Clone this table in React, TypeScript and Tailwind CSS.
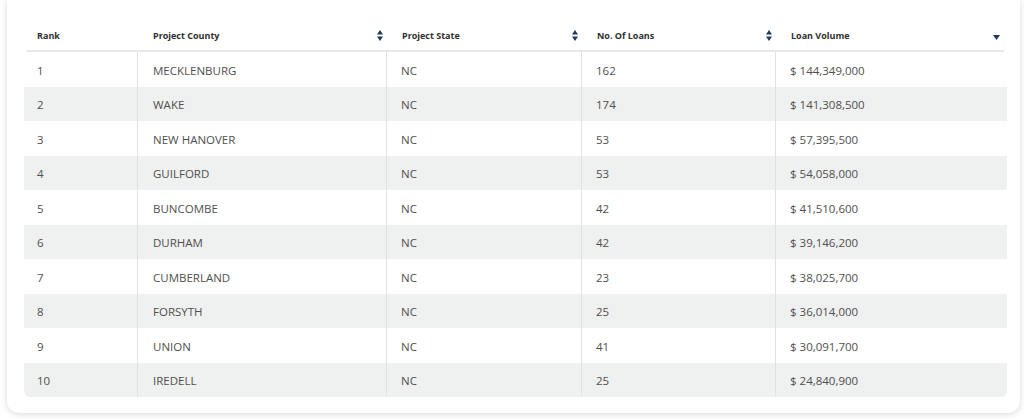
import React from "react";

type Row = { rank: number; county: string; state: string; loans: number; volume: string };

const rows: Row[] = [
  { rank: 1, county: "MECKLENBURG", state: "NC", loans: 162, volume: "$ 144,349,000" },
  { rank: 2, county: "WAKE", state: "NC", loans: 174, volume: "$ 141,308,500" },
  { rank: 3, county: "NEW HANOVER", state: "NC", loans: 53, volume: "$ 57,395,500" },
  { rank: 4, county: "GUILFORD", state: "NC", loans: 53, volume: "$ 54,058,000" },
  { rank: 5, county: "BUNCOMBE", state: "NC", loans: 42, volume: "$ 41,510,600" },
  { rank: 6, county: "DURHAM", state: "NC", loans: 42, volume: "$ 39,146,200" },
  { rank: 7, county: "CUMBERLAND", state: "NC", loans: 23, volume: "$ 38,025,700" },
  { rank: 8, county: "FORSYTH", state: "NC", loans: 25, volume: "$ 36,014,000" },
  { rank: 9, county: "UNION", state: "NC", loans: 41, volume: "$ 30,091,700" },
  { rank: 10, county: "IREDELL", state: "NC", loans: 25, volume: "$ 24,840,900" },
];

const SortBoth = () => (
  <svg width="6" height="11" viewBox="0 0 6 11" className="shrink-0">
    <path d="M3 0 L6 4.5 L0 4.5 Z" fill="#1e3a5c" />
    <path d="M3 11 L6 6.5 L0 6.5 Z" fill="#1e3a5c" />
  </svg>
);

const SortDown = () => (
  <svg width="7" height="5" viewBox="0 0 7 5" className="shrink-0">
    <path d="M0 0 L7 0 L3.5 5 Z" fill="#1e3a5c" />
  </svg>
);

const cols = ["w-[114px]", "w-[249px]", "w-[195px]", "w-[194px]", "w-[231px]"];

export default function App() {
  return (
    <div className="w-[1024px] h-[419px] bg-white overflow-hidden" style={{ fontFamily: '"Open Sans", "Liberation Sans", sans-serif' }}>
      <div className="ml-[7px] w-[1013px] h-[413px] bg-white rounded-b-[12px] shadow-[0_1px_6px_rgba(0,0,0,0.16)] pt-[21px] pl-[17px]">
        <div className="w-[983px]">
          {/* header */}
          <div className="flex h-[31px] items-center text-[9px] font-bold text-[#2f2f2f] border-b-2 border-[#e6e8ea] mx-[3px]">
            <div className="w-[111px] pl-[10px]">Rank</div>
            <div className="w-[249px] pl-[15px] pr-[4px] flex items-center justify-between">
              <span>Project County</span>
              <SortBoth />
            </div>
            <div className="w-[195px] pl-[15px] pr-[4px] flex items-center justify-between">
              <span>Project State</span>
              <SortBoth />
            </div>
            <div className="w-[194px] pl-[15px] pr-[4px] flex items-center justify-between">
              <span>No. Of Loans</span>
              <SortBoth />
            </div>
            <div className="w-[228px] pl-[15px] pr-[4px] flex items-center justify-between pt-[4px]">
              <span className="-mt-[4px]">Loan Volume</span>
              <SortDown />
            </div>
          </div>
          {/* body */}
          <div className="text-[11.5px] text-[#4f4f4f]">
            {rows.map((r, i) => (
              <div
                key={r.rank}
                className={`flex h-[34.5px] items-center ${i % 2 === 1 ? "bg-[#eff0f0]" : "bg-white"} ${i === rows.length - 1 ? "rounded-b-[6px]" : ""}`}
              >
                <div className={`${cols[0]} h-full flex items-center pl-[13px] pt-[2px] border-r border-[#dfe1e3]`}>{r.rank}</div>
                <div className={`${cols[1]} h-full flex items-center pl-[15px] pt-[2px] border-r border-[#dfe1e3]`}>{r.county}</div>
                <div className={`${cols[2]} h-full flex items-center pl-[14px] pt-[2px] border-r border-[#dfe1e3]`}>{r.state}</div>
                <div className={`${cols[3]} h-full flex items-center pl-[14px] pt-[2px] border-r border-[#dfe1e3]`}>{r.loans}</div>
                <div className={`${cols[4]} h-full flex items-center pl-[14px] pt-[2px]`}>{r.volume}</div>
              </div>
            ))}
          </div>
        </div>
      </div>
    </div>
  );
}
